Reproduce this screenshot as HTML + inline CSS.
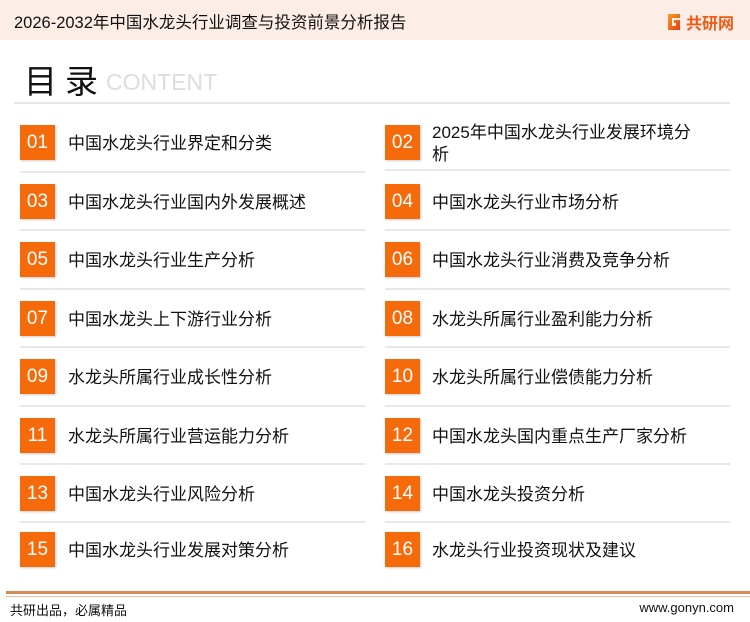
<!DOCTYPE html>
<html><head><meta charset="utf-8"><style>
*{margin:0;padding:0;box-sizing:border-box}
body{width:750px;height:622px;background:#fff;position:relative;overflow:hidden;font-family:"Liberation Sans","Noto Sans CJK SC",sans-serif;color:#222}
.hdr{position:absolute;left:0;top:0;width:750px;height:40px;background:#fcede6}
.hdr .t{position:absolute;left:14px;top:9px;font-size:16.5px;color:#111}
.logo{position:absolute;left:666px;top:10px;font-size:16px;font-weight:bold;color:#f05a14;display:flex;align-items:center}
.logo svg{margin-right:4px}
.mulu{position:absolute;left:24px;top:55px;font-size:33px;color:#111;letter-spacing:8px}
.cont{position:absolute;left:106px;top:69px;font-size:23px;color:#ddd}
.hl{position:absolute;left:14px;top:102px;width:716px;height:2px;background:#e6e6e6}
.box{position:absolute;width:35px;height:35px;background:#f56a0a;color:#fff;font-size:19px;text-align:center;line-height:35px;box-shadow:1px 1px 2px rgba(0,0,0,.2)}
.txt{position:absolute;font-size:17px;color:#111;line-height:22px}
.sep{position:absolute;height:2px;background:#e8e8e8;width:345px}
.f1{position:absolute;left:6px;top:591px;width:744px;height:3px;background:#d48a55}
.f2{position:absolute;left:6px;top:596px;width:744px;height:1px;background:#e8c0a0}
.ft{position:absolute;left:10px;top:600px;font-size:13px;color:#111}
.fr{position:absolute;right:16px;top:600px;font-size:13px;color:#111}
</style></head><body>
<div class="hdr"><div class="t">2026-2032年中国水龙头行业调查与投资前景分析报告</div>
<div class="logo"><svg width="16" height="18" viewBox="0 0 16 18"><defs><linearGradient id="g" x1="0" y1="0" x2="1" y2="1"><stop offset="0" stop-color="#f5a020"/><stop offset="1" stop-color="#ee3b16"/></linearGradient></defs><path d="M2 1h12v4H6v8h4v-3H8V7h6v10H2z" fill="url(#g)"/></svg>共研网</div></div>
<div class="mulu">目录</div><div class="cont">CONTENT</div>
<div class="hl"></div>

<div class="box" style="left:20px;top:125px">01</div><div class="txt" style="left:68px;top:133px">中国水龙头行业界定和分类</div><div class="sep" style="left:20px;top:171px"></div>
<div class="box" style="left:385px;top:125px">02</div><div class="txt" style="left:432px;top:122px">2025年中国水龙头行业发展环境分<br>析</div><div class="sep" style="left:385px;top:169px"></div>

<div class="box" style="left:20px;top:184px">03</div><div class="txt" style="left:68px;top:192px">中国水龙头行业国内外发展概述</div><div class="sep" style="left:20px;top:229px"></div>
<div class="box" style="left:385px;top:184px">04</div><div class="txt" style="left:432px;top:192px">中国水龙头行业市场分析</div><div class="sep" style="left:385px;top:229px"></div>

<div class="box" style="left:20px;top:242px">05</div><div class="txt" style="left:68px;top:250px">中国水龙头行业生产分析</div><div class="sep" style="left:20px;top:288px"></div>
<div class="box" style="left:385px;top:242px">06</div><div class="txt" style="left:432px;top:250px">中国水龙头行业消费及竞争分析</div><div class="sep" style="left:385px;top:288px"></div>

<div class="box" style="left:20px;top:301px">07</div><div class="txt" style="left:68px;top:309px">中国水龙头上下游行业分析</div><div class="sep" style="left:20px;top:346px"></div>
<div class="box" style="left:385px;top:301px">08</div><div class="txt" style="left:432px;top:309px">水龙头所属行业盈利能力分析</div><div class="sep" style="left:385px;top:346px"></div>

<div class="box" style="left:20px;top:359px">09</div><div class="txt" style="left:68px;top:367px">水龙头所属行业成长性分析</div><div class="sep" style="left:20px;top:405px"></div>
<div class="box" style="left:385px;top:359px">10</div><div class="txt" style="left:432px;top:367px">水龙头所属行业偿债能力分析</div><div class="sep" style="left:385px;top:405px"></div>

<div class="box" style="left:20px;top:418px">11</div><div class="txt" style="left:68px;top:426px">水龙头所属行业营运能力分析</div><div class="sep" style="left:20px;top:463px"></div>
<div class="box" style="left:385px;top:418px">12</div><div class="txt" style="left:432px;top:426px">中国水龙头国内重点生产厂家分析</div><div class="sep" style="left:385px;top:463px"></div>

<div class="box" style="left:20px;top:476px">13</div><div class="txt" style="left:68px;top:484px">中国水龙头行业风险分析</div><div class="sep" style="left:20px;top:521px"></div>
<div class="box" style="left:385px;top:476px">14</div><div class="txt" style="left:432px;top:484px">中国水龙头投资分析</div><div class="sep" style="left:385px;top:521px"></div>

<div class="box" style="left:20px;top:532px">15</div><div class="txt" style="left:68px;top:540px">中国水龙头行业发展对策分析</div>
<div class="box" style="left:385px;top:532px">16</div><div class="txt" style="left:432px;top:540px">水龙头行业投资现状及建议</div>

<div class="f1"></div><div class="f2"></div>
<div class="ft">共研出品，必属精品</div><div class="fr">www.gonyn.com</div>
</body></html>
